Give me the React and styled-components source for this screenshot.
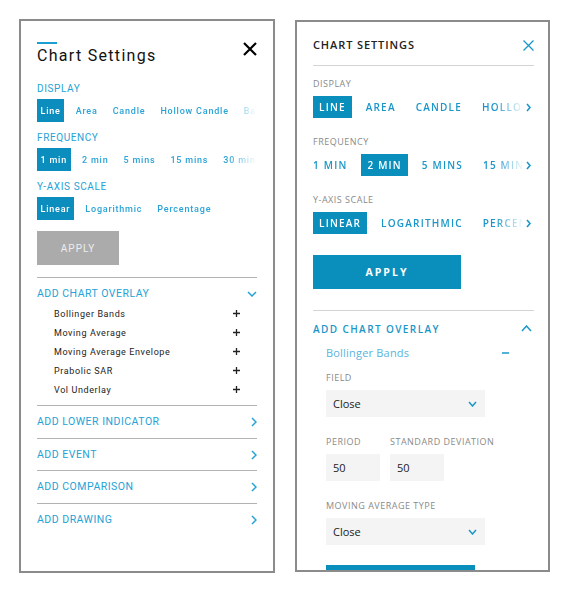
import React from 'react';
import styled, { createGlobalStyle } from 'styled-components';

const GlobalStyle = createGlobalStyle`
  body {
    margin: 0;
    background: #fff;
  }
  * {
    box-sizing: border-box;
  }
`;

const Page = styled.div`
  display: flex;
  align-items: flex-start;
  gap: 20px;
  padding: 19px 0 0 19px;
`;

const Panel = styled.div`
  width: 256px;
  height: 554px;
  border: 2px solid #8b8b8b;
  overflow: hidden;
  background: #fff;
`;

/* ---------- left: classic panel ---------- */

const ClassicPanel = styled(Panel)`
  padding: 21px 16px 0;
  font-family: Roboto, "Liberation Sans", sans-serif;
`;

const ClassicHeader = styled.div`
  display: flex;
  justify-content: space-between;
  align-items: flex-start;
  margin-bottom: 15.5px;
`;

const Accent = styled.div`
  width: 20px;
  height: 2px;
  background: #1b9fd3;
  margin-bottom: 2px;
`;

const ClassicTitle = styled.h1`
  margin: 0;
  font-size: 16px;
  line-height: 20px;
  font-weight: 400;
  letter-spacing: 1.3px;
  color: #111;
`;

const ClassicLabel = styled.div`
  font-size: 10px;
  line-height: 14px;
  letter-spacing: 0.6px;
  color: #25a2d6;
  margin-bottom: 3.5px;
`;

const ClassicChips = styled.div`
  display: flex;
  gap: 8px;
  height: 23px;
  margin-bottom: 8.5px;
  overflow: hidden;
  white-space: nowrap;
  mask-image: linear-gradient(to right, #000 86%, transparent 100%);
`;

const ClassicChip = styled.span`
  flex-shrink: 0;
  display: flex;
  align-items: center;
  padding: 0 3.5px;
  font-size: 9px;
  font-weight: 500;
  letter-spacing: 0.8px;
  color: ${p => (p.$active ? '#fff' : '#2aa3d6')};
  background: ${p => (p.$active ? '#0b8dbe' : 'transparent')};
`;

const ClassicApply = styled.button`
  display: block;
  width: 82px;
  height: 34px;
  margin: 11px 0 12px;
  border: 0;
  background: #ababab;
  color: #ededed;
  font-family: inherit;
  font-size: 10px;
  letter-spacing: 1px;
`;

const ClassicSection = styled.div`
  border-top: 1px solid #b2b2b2;
`;

const ClassicAccHeader = styled.div`
  display: flex;
  justify-content: space-between;
  align-items: center;
  padding: ${p => (p.$open ? '9px 0 3px' : '9px 0 8.5px')};
  font-size: 10.5px;
  line-height: 14px;
  letter-spacing: 0.5px;
  color: #25a2d6;
`;

const OverlayList = styled.div`
  padding: 0 17px 6px 17px;
`;

const OverlayItem = styled.div`
  display: flex;
  justify-content: space-between;
  align-items: center;
  height: 19px;
  font-size: 9px;
  font-weight: 400;
  letter-spacing: 0.6px;
  color: #222;
`;

/* ---------- right: modern panel ---------- */

const ModernPanel = styled(Panel)`
  width: 255px;
  height: 552px;
  margin-top: 1px;
  padding: 16px 14px 0 16px;
  font-family: "Open Sans", "Liberation Sans", sans-serif;
`;

const ModernHeader = styled.div`
  display: flex;
  justify-content: space-between;
  align-items: center;
  height: 14px;
  margin-bottom: 13px;
`;

const ModernTitle = styled.h2`
  margin: 0;
  font-size: 11px;
  line-height: 14px;
  font-weight: 600;
  letter-spacing: 0.9px;
  color: #222;
`;

const ModernDivider = styled.div`
  height: 1px;
  background: #d4d4d4;
  margin-top: ${p => p.$before || 0}px;
  margin-bottom: ${p => p.$after || 0}px;
`;

const ModernLabel = styled.div`
  font-size: 9px;
  line-height: 14px;
  letter-spacing: 0.5px;
  color: #8a8a8a;
  margin-bottom: 5px;
`;

const ModernChipRow = styled.div`
  display: flex;
  align-items: center;
  height: 22px;
  margin-bottom: 17px;
`;

const ModernChipTrack = styled.div`
  flex: 1;
  min-width: 0;
  height: 100%;
  display: flex;
  gap: 8px;
  margin-left: ${p => p.$shift || 0}px;
  overflow: hidden;
  white-space: nowrap;
  mask-image: linear-gradient(to right, #000 86%, transparent 100%);
`;

const ModernChip = styled.span`
  flex-shrink: 0;
  display: flex;
  align-items: center;
  padding: 0 6px;
  font-size: 10px;
  font-weight: 600;
  letter-spacing: 1.2px;
  color: ${p => (p.$active ? '#fff' : '#1a96c8')};
  background: ${p => (p.$active ? '#0a8fbd' : 'transparent')};
`;

const ModernArrow = styled.svg`
  flex-shrink: 0;
  margin: 0 3px 0 2px;
`;

const ModernButton = styled.button`
  display: block;
  width: ${p => p.$width}px;
  height: 34px;
  margin-top: ${p => p.$top}px;
  border: 0;
  background: #0a8fbd;
  color: #fff;
  font-family: inherit;
  font-size: 10.5px;
  font-weight: 700;
  letter-spacing: 2px;
`;

const ModernAccHeader = styled.div`
  display: flex;
  justify-content: space-between;
  align-items: center;
  margin-top: 10.5px;
  padding-right: 2px;
  font-size: 10px;
  line-height: 14px;
  font-weight: 600;
  letter-spacing: 1.4px;
  color: #1a96c8;
`;

const StudyRow = styled.div`
  display: flex;
  justify-content: space-between;
  align-items: center;
  margin-top: 9.5px;
  padding: 0 25px 0 13px;
  font-size: 11px;
  line-height: 16px;
  letter-spacing: 0.2px;
  color: #5ab4dc;
`;

const StudyFields = styled.div`
  padding-left: 13px;
`;

const Field = styled.div`
  margin-top: ${p => p.$top}px;
`;

const FieldPair = styled.div`
  display: flex;
  gap: 10px;
  margin-top: 18px;
`;

const SelectBox = styled.div`
  display: flex;
  justify-content: space-between;
  align-items: center;
  width: 159px;
  height: 27px;
  padding: 0 8px 0 7px;
  background: #f4f4f4;
  font-size: 11px;
  color: #222;
`;

const NumberBox = styled.div`
  display: flex;
  align-items: center;
  width: 54px;
  height: 27px;
  padding-left: 7px;
  background: #f4f4f4;
  font-size: 11px;
  color: #222;
`;

/* ---------- icons ---------- */

const Chevron = ({ dir, color, w, h, sw = 1.5 }) => {
  const paths = {
    down: `M1 1 L${w / 2} ${h - 1} L${w - 1} 1`,
    up: `M1 ${h - 1} L${w / 2} 1 L${w - 1} ${h - 1}`,
    right: `M1 1 L${w - 1} ${h / 2} L1 ${h - 1}`,
  };
  return (
    <svg width={w} height={h} viewBox={`0 0 ${w} ${h}`}>
      <path d={paths[dir]} fill="none" stroke={color} strokeWidth={sw} />
    </svg>
  );
};

const Plus = () => (
  <svg width="7" height="7" viewBox="0 0 7 7">
    <path d="M3.5 0 V7 M0 3.5 H7" stroke="#222" strokeWidth="1.3" />
  </svg>
);

const displayTypes = ['Line', 'Area', 'Candle', 'Hollow Candle', 'Bar'];
const frequencies = ['1 min', '2 min', '5 mins', '15 mins', '30 mins'];
const scales = ['Linear', 'Logarithmic', 'Percentage'];
const overlays = ['Bollinger Bands', 'Moving Average', 'Moving Average Envelope', 'Prabolic SAR', 'Vol Underlay'];
const moreSections = ['ADD LOWER INDICATOR', 'ADD EVENT', 'ADD COMPARISON', 'ADD DRAWING'];

const BLUE = '#1a96c8';

function ClassicSettings() {
  const groups = [
    { label: 'DISPLAY', items: displayTypes, active: 0 },
    { label: 'FREQUENCY', items: frequencies, active: 0 },
    { label: 'Y-AXIS SCALE', items: scales, active: 0 },
  ];
  return (
    <ClassicPanel>
      <ClassicHeader>
        <div>
          <Accent />
          <ClassicTitle>Chart Settings</ClassicTitle>
        </div>
        <svg width="14" height="14" viewBox="0 0 14 14">
          <path d="M1 1 L13 13 M13 1 L1 13" stroke="#000" strokeWidth="2.2" />
        </svg>
      </ClassicHeader>

      {groups.map(g => (
        <div key={g.label}>
          <ClassicLabel>{g.label}</ClassicLabel>
          <ClassicChips>
            {g.items.map((it, i) => (
              <ClassicChip key={it} $active={i === g.active}>{it}</ClassicChip>
            ))}
          </ClassicChips>
        </div>
      ))}

      <ClassicApply>APPLY</ClassicApply>

      <ClassicSection>
        <ClassicAccHeader $open>
          ADD CHART OVERLAY
          <Chevron dir="down" color="#25a2d6" w={10} h={6} />
        </ClassicAccHeader>
        <OverlayList>
          {overlays.map(o => (
            <OverlayItem key={o}>
              {o}
              <Plus />
            </OverlayItem>
          ))}
        </OverlayList>
      </ClassicSection>

      {moreSections.map(s => (
        <ClassicSection key={s}>
          <ClassicAccHeader>
            {s}
            <Chevron dir="right" color="#25a2d6" w={6} h={10} />
          </ClassicAccHeader>
        </ClassicSection>
      ))}
    </ClassicPanel>
  );
}

function ModernSettings() {
  const groups = [
    { label: 'DISPLAY', items: ['LINE', 'AREA', 'CANDLE', 'HOLLOW CANDLE'], active: 0, shift: 0 },
    { label: 'FREQUENCY', items: ['1 MIN', '2 MIN', '5 MINS', '15 MINS'], active: 1, shift: -6 },
    { label: 'Y-AXIS SCALE', items: ['LINEAR', 'LOGARITHMIC', 'PERCENTAGE'], active: 0, shift: 0 },
  ];
  return (
    <ModernPanel>
      <ModernHeader>
        <ModernTitle>CHART SETTINGS</ModernTitle>
        <svg width="11" height="11" viewBox="0 0 11 11">
          <path d="M0.5 0.5 L10.5 10.5 M10.5 0.5 L0.5 10.5" stroke={BLUE} strokeWidth="1.3" />
        </svg>
      </ModernHeader>
      <ModernDivider $after={11} />

      {groups.map(g => (
        <div key={g.label}>
          <ModernLabel>{g.label}</ModernLabel>
          <ModernChipRow>
            <ModernChipTrack $shift={g.shift}>
              {g.items.map((it, i) => (
                <ModernChip key={it} $active={i === g.active}>{it}</ModernChip>
              ))}
            </ModernChipTrack>
            <ModernArrow width="5" height="9" viewBox="0 0 5 9">
              <path d="M1 1 L4 4.5 L1 8" fill="none" stroke={BLUE} strokeWidth="1.6" />
            </ModernArrow>
          </ModernChipRow>
        </div>
      ))}

      <ModernButton $width={148} $top={21}>APPLY</ModernButton>
      <ModernDivider $before={21} />

      <ModernAccHeader>
        ADD CHART OVERLAY
        <Chevron dir="up" color={BLUE} w={11} h={7} />
      </ModernAccHeader>

      <StudyRow>
        Bollinger Bands
        <svg width="7" height="2" viewBox="0 0 7 2">
          <path d="M0 1 H7" stroke={BLUE} strokeWidth="1.5" />
        </svg>
      </StudyRow>

      <StudyFields>
        <Field $top={10}>
          <ModernLabel>FIELD</ModernLabel>
          <SelectBox>
            Close
            <Chevron dir="down" color={BLUE} w={9} h={6} />
          </SelectBox>
        </Field>

        <FieldPair>
          <div>
            <ModernLabel>PERIOD</ModernLabel>
            <NumberBox>50</NumberBox>
          </div>
          <div>
            <ModernLabel>STANDARD DEVIATION</ModernLabel>
            <NumberBox>50</NumberBox>
          </div>
        </FieldPair>

        <Field $top={18}>
          <ModernLabel>MOVING AVERAGE TYPE</ModernLabel>
          <SelectBox>
            Close
            <Chevron dir="down" color={BLUE} w={9} h={6} />
          </SelectBox>
        </Field>

        <ModernButton $width={149} $top={20}>APPLY</ModernButton>
      </StudyFields>
    </ModernPanel>
  );
}

export default function App() {
  return (
    <>
      <GlobalStyle />
      <Page>
        <ClassicSettings />
        <ModernSettings />
      </Page>
    </>
  );
}
